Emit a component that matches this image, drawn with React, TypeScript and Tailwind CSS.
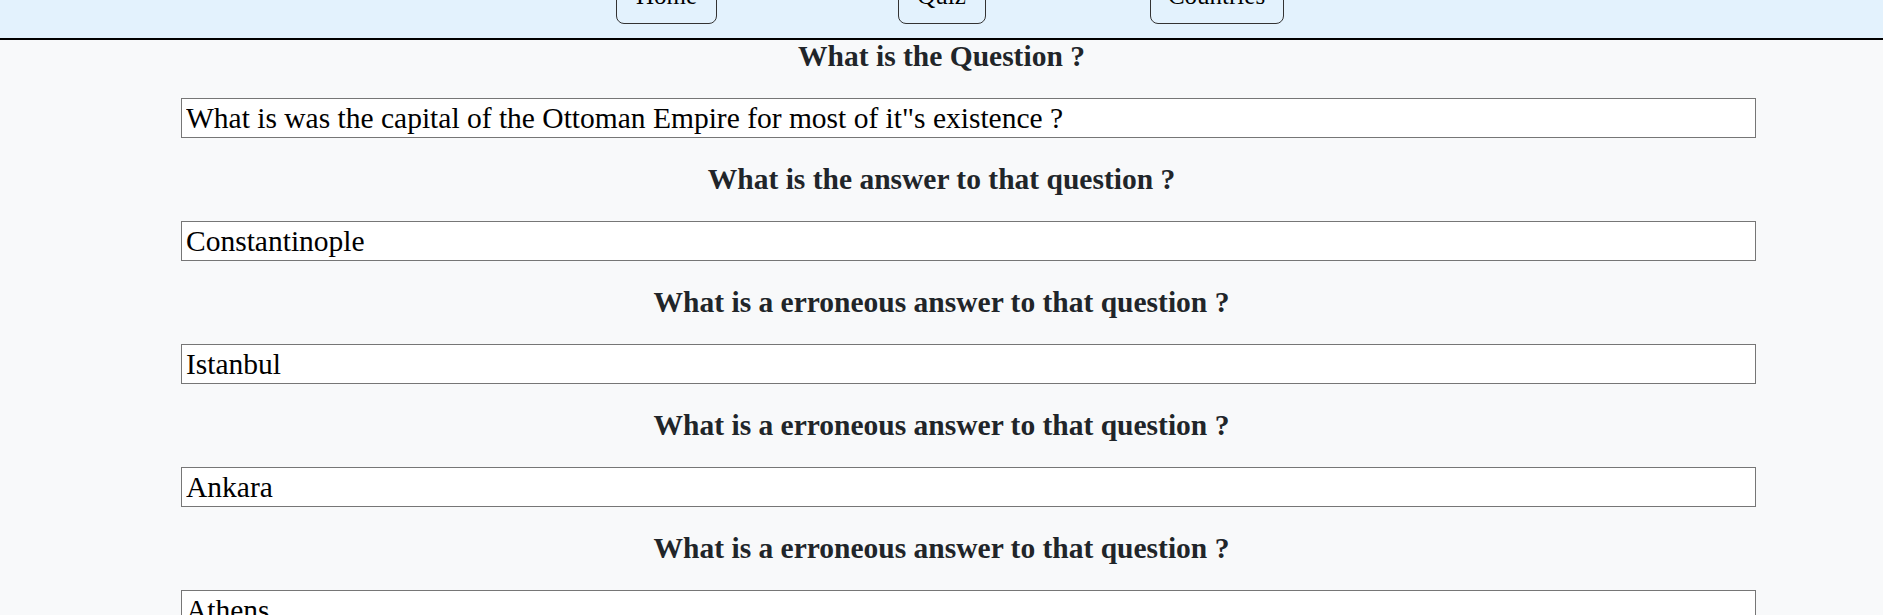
import React from "react";

const serif = { fontFamily: '"Liberation Serif", "DejaVu Serif", serif' };

function Field({ label, value }: { label: string; value: string }) {
  return (
    <div className="flex flex-col">
      <h2 className="text-center text-[29.5px] leading-[32px] font-bold text-[#212529]">{label}</h2>
      <div className="pl-[181px] mt-[26px] mb-[25px]">
        <input
          readOnly
          value={value}
          className="block w-[1575px] h-[40px] bg-white border border-[#767676] px-[4px] text-[29.5px] text-black outline-none"
          style={serif}
        />
      </div>
    </div>
  );
}

export default function App() {
  return (
    <div className="w-[1883px] h-[615px] overflow-hidden bg-[#f8f9fa]" style={serif}>
      <header className="h-[40px] bg-[#e3f2fd] border-b-2 border-black flex items-end justify-center pb-[14px] overflow-hidden">
        <div className="w-[275px] flex justify-center">
          <button className="w-[101px] h-[50px] border border-[#333] rounded-[8px] pt-[7px] pb-[15px] text-[25px] leading-[28px] text-black flex justify-center items-start">Home</button>
        </div>
        <div className="w-[275px] flex justify-center">
          <button className="w-[88px] h-[50px] border border-[#333] rounded-[8px] pt-[7px] pb-[15px] text-[25px] leading-[28px] text-black flex justify-center items-start">Quiz</button>
        </div>
        <div className="w-[275px] flex justify-center">
          <button className="w-[134px] h-[50px] border border-[#333] rounded-[8px] pt-[7px] pb-[15px] text-[25px] leading-[28px] text-black flex justify-center items-start">Countries</button>
        </div>
      </header>
      <main className="flex flex-col">
        <Field label="What is the Question ?" value={'What is was the capital of the Ottoman Empire for most of it"s existence ?'} />
        <Field label="What is the answer to that question ?" value="Constantinople" />
        <Field label="What is a erroneous answer to that question ?" value="Istanbul" />
        <Field label="What is a erroneous answer to that question ?" value="Ankara" />
        <Field label="What is a erroneous answer to that question ?" value="Athens" />
      </main>
    </div>
  );
}
